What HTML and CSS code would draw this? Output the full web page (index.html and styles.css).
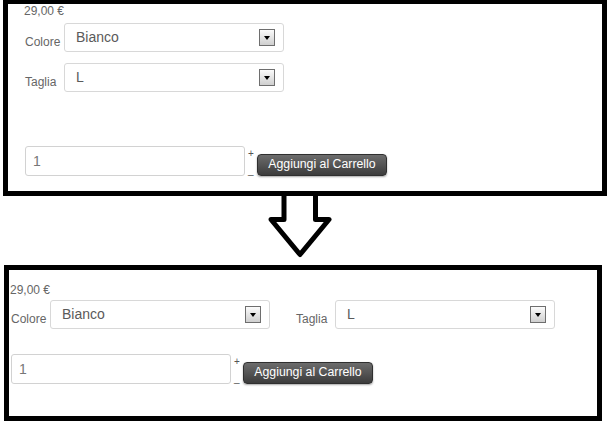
FILE: index.html
```html
<!DOCTYPE html>
<html lang="it">
<head>
    <meta charset="UTF-8">
    <meta name="viewport" content="width=device-width, initial-scale=1.0">
    <title>Prima e dopo</title>
    <link rel="stylesheet" href="styles.css">
</head>
<body>
    <!-- prima: campi uno sotto l'altro -->
    <div class="frame frame-before">
        <div class="price">29,00 €</div>
        <div class="fields fields-stack">
            <div class="field">
                <label class="field-label">Colore</label>
                <div class="select"><span class="select-value">Bianco</span><i class="select-btn"></i></div>
            </div>
            <div class="field">
                <label class="field-label">Taglia</label>
                <div class="select"><span class="select-value">L</span><i class="select-btn"></i></div>
            </div>
        </div>
        <div class="buy">
            <input class="qty" type="text" value="1">
            <div class="qty-steps"><span class="step-up">+</span><span class="step-down">_</span></div>
            <button class="add" type="button">Aggiungi al Carrello</button>
        </div>
    </div>

    <!-- freccia -->
    <svg class="arrow" width="611" height="69" viewBox="0 0 611 69">
        <path d="M284 0 V23.5 H271 L300 58.5 L329 23.5 H315.5 V0" fill="#fff" stroke="#000" stroke-width="5" stroke-linejoin="round"/>
    </svg>

    <!-- dopo: campi affiancati -->
    <div class="frame frame-after">
        <div class="price">29,00 €</div>
        <div class="fields fields-row">
            <div class="field">
                <label class="field-label">Colore</label>
                <div class="select"><span class="select-value">Bianco</span><i class="select-btn"></i></div>
            </div>
            <div class="field field-low">
                <label class="field-label">Taglia</label>
                <div class="select"><span class="select-value">L</span><i class="select-btn"></i></div>
            </div>
        </div>
        <div class="buy">
            <input class="qty" type="text" value="1">
            <div class="qty-steps"><span class="step-up">+</span><span class="step-down">_</span></div>
            <button class="add" type="button">Aggiungi al Carrello</button>
        </div>
    </div>
</body>
</html>
```

FILE: styles.css
```css
body {
    margin: 0;
    padding: 0;
    background: #fff;
    font-family: "Liberation Sans", Arial, sans-serif;
    color: #666;
}

.frame {
    border: 5px solid #000;
    box-sizing: border-box;
    background: #fff;
}

.frame-before {
    border-top-width: 4px;
    margin-left: 3px;
    width: 604px;
    height: 196px;
    padding-left: 16px;
}

.frame-after {
    margin-left: 4px;
    width: 598px;
    height: 156px;
    padding-left: 1px;
}

.price {
    font-size: 12px;
    line-height: 14px;
    color: #666;
}

.frame-after .price {
    margin-top: 13px;
}

.fields {
    display: flex;
    margin-left: 1px;
}

.fields-stack {
    flex-direction: column;
    gap: 11px;
    margin-top: 5px;
}

.fields-row {
    gap: 26px;
    margin-top: 2px;
}

.field {
    display: flex;
    align-items: flex-end;
}

.field-low {
    margin-top: 1px;
}

.field-label {
    width: 36px;
    margin-right: 3px;
    margin-bottom: 3px;
    font-size: 12px;
    line-height: 14px;
    color: #666;
}

.select {
    display: flex;
    align-items: center;
    width: 220px;
    height: 29px;
    box-sizing: border-box;
    border: 1px solid #d8d8d8;
    border-radius: 3px;
    padding: 0 8px 0 11px;
    background: #fff;
}

.select-value {
    flex: 1;
    font-size: 14px;
    line-height: 27px;
    color: #5a5a5a;
}

.select-btn {
    position: relative;
    width: 16px;
    height: 17px;
    box-sizing: border-box;
    border: 1px solid #6e6e6e;
    background: linear-gradient(#fbfbfb, #cfcfcf);
}

.select-btn::after {
    content: "";
    position: absolute;
    left: 3.5px;
    top: 5.5px;
    border-left: 3.5px solid transparent;
    border-right: 3.5px solid transparent;
    border-top: 4px solid #000;
}

.buy {
    display: flex;
    align-items: flex-end;
    margin-left: 1px;
}

.frame-before .buy {
    margin-top: 54px;
}

.frame-after .buy {
    margin-top: 25px;
}

.qty {
    width: 220px;
    height: 30px;
    box-sizing: border-box;
    margin: 0;
    border: 1px solid #d2d2d2;
    border-radius: 3px;
    padding: 0 0 0 7px;
    font-family: inherit;
    font-size: 14px;
    color: #777;
    background: #fff;
    outline: none;
}

.qty-steps {
    display: flex;
    flex-direction: column;
    justify-content: space-between;
    width: 8px;
    height: 30px;
    margin-left: 3px;
    font-size: 10px;
    line-height: 10px;
    color: #555;
}

.step-up {
    margin-top: 3px;
}

.add {
    width: 130px;
    height: 22px;
    box-sizing: border-box;
    margin: 0 0 0 1px;
    padding: 0 0 2px;
    border: 1px solid #2f2f2f;
    border-radius: 4px;
    background: linear-gradient(#6c6c6c, #3c3c3c);
    box-shadow: 0 1px 2px rgba(0, 0, 0, 0.35);
    color: #fff;
    font-family: inherit;
    font-size: 12.3px;
    line-height: 18px;
    cursor: pointer;
}

.arrow {
    display: block;
    overflow: visible;
}
```
